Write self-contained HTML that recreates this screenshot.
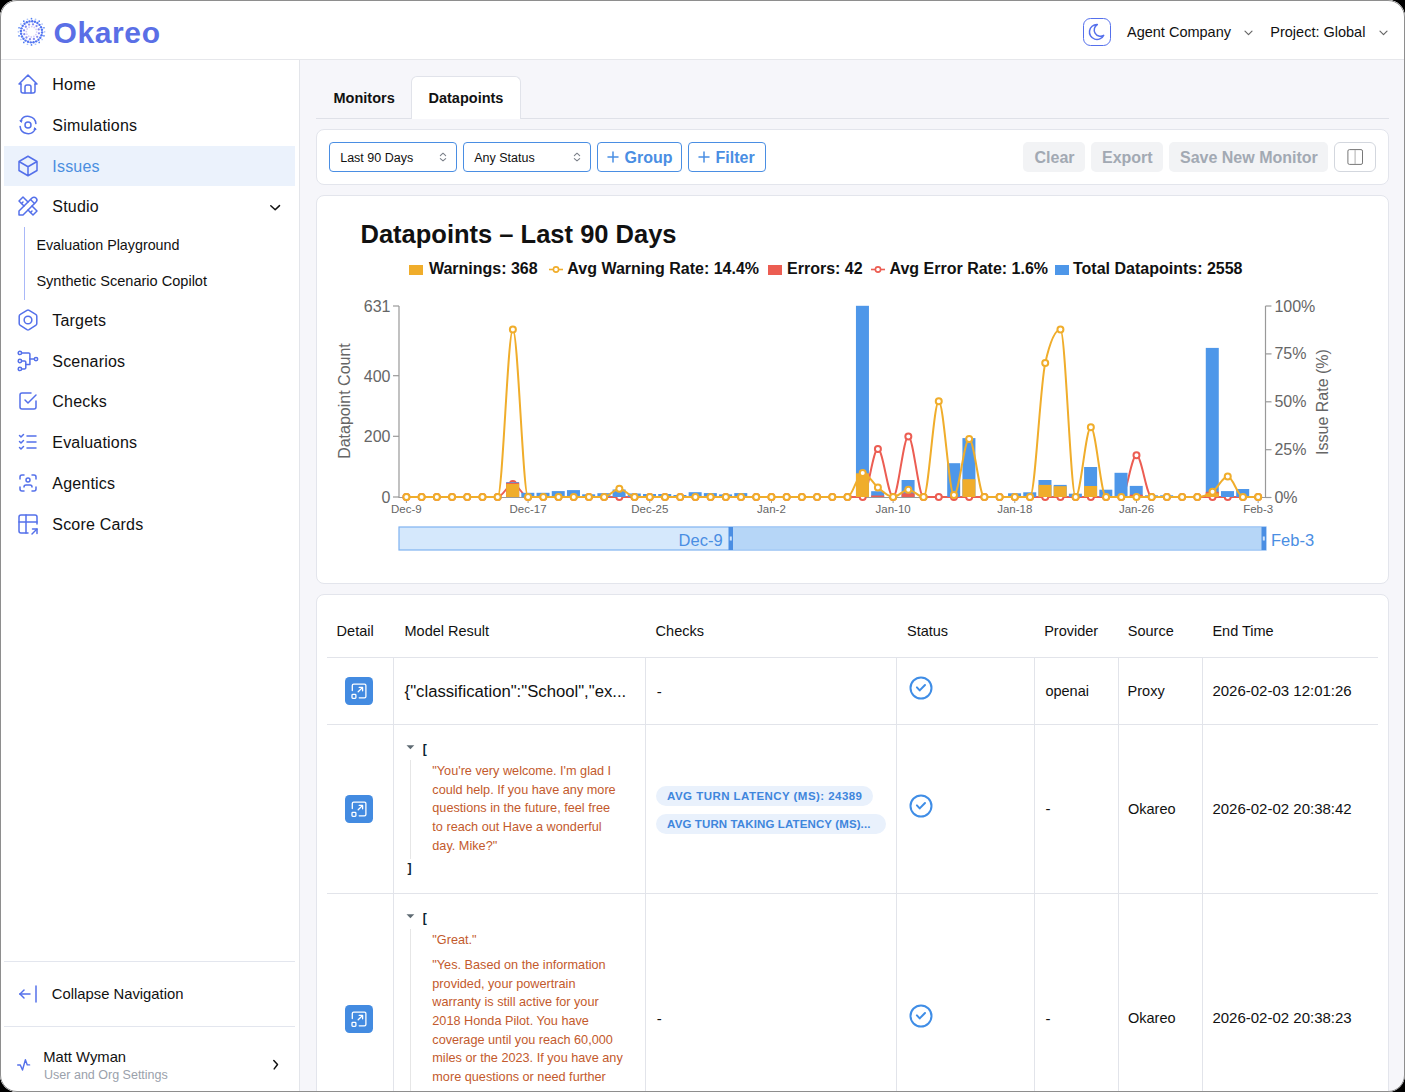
<!DOCTYPE html><html><head><meta charset="utf-8"><style>
html,body{margin:0;padding:0;background:#000;}
body{width:1405px;height:1092px;overflow:hidden;position:relative;font-family:"Liberation Sans",sans-serif;}
#win{position:absolute;left:0;top:0;width:1405px;height:1092px;border-radius:17px;overflow:hidden;background:#f6f6fa;}
.t{position:absolute;line-height:1;white-space:nowrap;}
svg{overflow:visible;position:absolute;}
</style></head><body><div id="win"><div style="position:absolute;left:0px;top:0px;width:1405px;height:59px;box-sizing:border-box;background:#fff;"></div><div style="position:absolute;left:0px;top:59px;width:1405px;height:1px;box-sizing:border-box;background:#e6e7eb;"></div><div style="position:absolute;left:0px;top:60px;width:299px;height:1032px;box-sizing:border-box;background:#fff;"></div><div style="position:absolute;left:299px;top:60px;width:1px;height:1032px;box-sizing:border-box;background:#e3e5ea;"></div><svg style="position:absolute;left:0px;top:0px;" width="60" height="60" viewBox="0 0 60 60" fill="none" ><circle cx="44.60" cy="31.80" r="0.85" fill="#4f7ff5" opacity="0.45"/><circle cx="43.96" cy="35.85" r="0.85" fill="#4f7ff5" opacity="1.0"/><circle cx="42.10" cy="39.50" r="0.85" fill="#4f7ff5" opacity="0.45"/><circle cx="39.20" cy="42.40" r="0.85" fill="#4f7ff5" opacity="1.0"/><circle cx="35.55" cy="44.26" r="0.85" fill="#4f7ff5" opacity="0.45"/><circle cx="31.50" cy="44.90" r="0.85" fill="#4f7ff5" opacity="1.0"/><circle cx="27.45" cy="44.26" r="0.85" fill="#4f7ff5" opacity="0.45"/><circle cx="23.80" cy="42.40" r="0.85" fill="#4f7ff5" opacity="1.0"/><circle cx="20.90" cy="39.50" r="0.85" fill="#4f7ff5" opacity="0.45"/><circle cx="19.04" cy="35.85" r="0.85" fill="#4f7ff5" opacity="1.0"/><circle cx="18.40" cy="31.80" r="0.85" fill="#4f7ff5" opacity="0.45"/><circle cx="19.04" cy="27.75" r="0.85" fill="#4f7ff5" opacity="1.0"/><circle cx="20.90" cy="24.10" r="0.85" fill="#4f7ff5" opacity="0.45"/><circle cx="23.80" cy="21.20" r="0.85" fill="#4f7ff5" opacity="1.0"/><circle cx="27.45" cy="19.34" r="0.85" fill="#4f7ff5" opacity="0.45"/><circle cx="31.50" cy="18.70" r="0.85" fill="#4f7ff5" opacity="1.0"/><circle cx="35.55" cy="19.34" r="0.85" fill="#4f7ff5" opacity="0.45"/><circle cx="39.20" cy="21.20" r="0.85" fill="#4f7ff5" opacity="1.0"/><circle cx="42.10" cy="24.10" r="0.85" fill="#4f7ff5" opacity="0.45"/><circle cx="43.96" cy="27.75" r="0.85" fill="#4f7ff5" opacity="1.0"/><circle cx="42.07" cy="32.54" r="1.2" fill="#3f66f0" opacity="0.9"/><circle cx="41.52" cy="35.25" r="1.2" fill="#3f66f0" opacity="0.9"/><circle cx="40.29" cy="37.73" r="1.2" fill="#3f66f0" opacity="0.9"/><circle cx="38.45" cy="39.80" r="1.2" fill="#3f66f0" opacity="0.9"/><circle cx="36.14" cy="41.33" r="1.2" fill="#3f66f0" opacity="0.9"/><circle cx="33.52" cy="42.21" r="1.2" fill="#3f66f0" opacity="0.9"/><circle cx="30.76" cy="42.37" r="1.2" fill="#3f66f0" opacity="0.9"/><circle cx="28.05" cy="41.82" r="1.2" fill="#3f66f0" opacity="0.9"/><circle cx="25.57" cy="40.59" r="1.2" fill="#3f66f0" opacity="0.9"/><circle cx="23.50" cy="38.75" r="1.2" fill="#3f66f0" opacity="0.9"/><circle cx="21.97" cy="36.44" r="1.2" fill="#3f66f0" opacity="0.9"/><circle cx="21.09" cy="33.82" r="1.2" fill="#3f66f0" opacity="0.9"/><circle cx="20.93" cy="31.06" r="1.2" fill="#3f66f0" opacity="0.9"/><circle cx="21.48" cy="28.35" r="1.2" fill="#3f66f0" opacity="0.9"/><circle cx="22.71" cy="25.87" r="1.2" fill="#3f66f0" opacity="0.9"/><circle cx="24.55" cy="23.80" r="1.2" fill="#3f66f0" opacity="0.9"/><circle cx="26.86" cy="22.27" r="1.2" fill="#3f66f0" opacity="0.9"/><circle cx="29.48" cy="21.39" r="1.2" fill="#3f66f0" opacity="0.9"/><circle cx="32.24" cy="21.23" r="1.2" fill="#3f66f0" opacity="0.9"/><circle cx="34.95" cy="21.78" r="1.2" fill="#3f66f0" opacity="0.9"/><circle cx="37.43" cy="23.01" r="1.2" fill="#3f66f0" opacity="0.9"/><circle cx="39.50" cy="24.85" r="1.2" fill="#3f66f0" opacity="0.9"/><circle cx="41.03" cy="27.16" r="1.2" fill="#3f66f0" opacity="0.9"/><circle cx="41.91" cy="29.78" r="1.2" fill="#3f66f0" opacity="0.9"/><circle cx="38.95" cy="33.31" r="1.15" fill="#6a6fee" opacity="0.8"/><circle cx="37.20" cy="36.83" r="1.15" fill="#6a6fee" opacity="0.8"/><circle cx="33.92" cy="39.01" r="1.15" fill="#6a6fee" opacity="0.8"/><circle cx="29.99" cy="39.25" r="1.15" fill="#6a6fee" opacity="0.8"/><circle cx="26.47" cy="37.50" r="1.15" fill="#6a6fee" opacity="0.8"/><circle cx="24.29" cy="34.22" r="1.15" fill="#6a6fee" opacity="0.8"/><circle cx="24.05" cy="30.29" r="1.15" fill="#6a6fee" opacity="0.8"/><circle cx="25.80" cy="26.77" r="1.15" fill="#6a6fee" opacity="0.8"/><circle cx="29.08" cy="24.59" r="1.15" fill="#6a6fee" opacity="0.8"/><circle cx="33.01" cy="24.35" r="1.15" fill="#6a6fee" opacity="0.8"/><circle cx="36.53" cy="26.10" r="1.15" fill="#6a6fee" opacity="0.8"/><circle cx="38.71" cy="29.38" r="1.15" fill="#6a6fee" opacity="0.8"/><circle cx="36.69" cy="32.06" r="0.9" fill="#b3a6f4" opacity="0.55"/><circle cx="35.87" cy="34.62" r="0.9" fill="#b3a6f4" opacity="0.55"/><circle cx="33.87" cy="36.43" r="0.9" fill="#b3a6f4" opacity="0.55"/><circle cx="31.24" cy="36.99" r="0.9" fill="#b3a6f4" opacity="0.55"/><circle cx="28.68" cy="36.17" r="0.9" fill="#b3a6f4" opacity="0.55"/><circle cx="26.87" cy="34.17" r="0.9" fill="#b3a6f4" opacity="0.55"/><circle cx="26.31" cy="31.54" r="0.9" fill="#b3a6f4" opacity="0.55"/><circle cx="27.13" cy="28.98" r="0.9" fill="#b3a6f4" opacity="0.55"/><circle cx="29.13" cy="27.17" r="0.9" fill="#b3a6f4" opacity="0.55"/><circle cx="31.76" cy="26.61" r="0.9" fill="#b3a6f4" opacity="0.55"/><circle cx="34.32" cy="27.43" r="0.9" fill="#b3a6f4" opacity="0.55"/><circle cx="36.13" cy="29.43" r="0.9" fill="#b3a6f4" opacity="0.55"/></svg><div class="t" style="left:53.60px;top:18.00px;font-size:30px;color:#5a6fe6;font-weight:700;letter-spacing:0.6px;">Okareo</div><svg style="position:absolute;left:1083px;top:18px;" width="28" height="28" viewBox="0 0 28 28" fill="none" ><rect x="0.5" y="0.5" width="27" height="27" rx="7" stroke="#5570ec" stroke-width="1"/><g transform="translate(4,4) scale(0.8333)"><path d="M12 3c.132 0 .263 0 .393 0a7.5 7.5 0 0 0 7.605 12.992a9 9 0 1 1 -7.998 -12.992z" stroke="#5570ec" stroke-width="1.8" stroke-linecap="round" stroke-linejoin="round"/></g></svg><div class="t" style="left:1127.00px;top:25.00px;font-size:14.5px;color:#111;">Agent Company</div><svg style="position:absolute;left:1243.5px;top:28.5px;" width="9" height="7" viewBox="0 0 9 7" fill="none" ><path d="M1 2.10 L4.50 5.60 L8.00 2.10" stroke="#666" stroke-width="1.2" stroke-linecap="round" stroke-linejoin="round"/></svg><div class="t" style="left:1270.30px;top:25.00px;font-size:14.5px;color:#111;">Project: Global</div><svg style="position:absolute;left:1378.5px;top:28.5px;" width="9" height="7" viewBox="0 0 9 7" fill="none" ><path d="M1 2.10 L4.50 5.60 L8.00 2.10" stroke="#666" stroke-width="1.2" stroke-linecap="round" stroke-linejoin="round"/></svg><div style="position:absolute;left:4px;top:146px;width:291px;height:40px;box-sizing:border-box;background:#ebf2fc;"></div><div class="t" style="left:52.30px;top:77.00px;font-size:16px;color:#111;letter-spacing:0.2px;">Home</div><svg style="position:absolute;left:16px;top:72.2px;" width="24" height="24" viewBox="0 0 24 24" fill="none" ><g stroke="#5470ea" stroke-width="1.500" stroke-linecap="round" stroke-linejoin="round" fill="none"><path d="M5 12l-2 0l9 -9l9 9l-2 0"/><path d="M5 12v7a2 2 0 0 0 2 2h10a2 2 0 0 0 2 -2v-7"/><path d="M9 21v-6a2 2 0 0 1 2 -2h2a2 2 0 0 1 2 2v6"/></g></svg><div class="t" style="left:52.30px;top:118.00px;font-size:16px;color:#111;letter-spacing:0.2px;">Simulations</div><svg style="position:absolute;left:16px;top:113.2px;" width="24" height="24" viewBox="0 0 24 24" fill="none" ><g stroke="#5470ea" stroke-width="1.5" stroke-linecap="round" fill="none"><circle cx="12" cy="12" r="3"/><path d="M4.6 8.2 A8 8 0 0 1 19.9 10.6"/><path d="M4.1 13.4 A8 8 0 0 0 19.4 15.8"/></g><path d="M3.2 7.3 L6.6 6.9 L5.6 10.0 Z" fill="#5470ea"/><path d="M20.8 16.7 L17.4 17.1 L18.4 14.0 Z" fill="#5470ea"/></svg><div class="t" style="left:52.30px;top:159.00px;font-size:16px;color:#4a8ee0;letter-spacing:0.2px;">Issues</div><svg style="position:absolute;left:16px;top:154.2px;" width="24" height="24" viewBox="0 0 24 24" fill="none" ><g stroke="#5470ea" stroke-width="1.500" stroke-linecap="round" stroke-linejoin="round" fill="none"><path d="M21 7.5l-9 -5.25L3 7.5m18 0l-9 5.25m9 -5.25v9l-9 5.25M3 7.5l9 5.25M3 7.5v9l9 5.25m0 -9v9"/></g></svg><div class="t" style="left:52.30px;top:199.00px;font-size:16px;color:#111;letter-spacing:0.2px;">Studio</div><svg style="position:absolute;left:16px;top:194.2px;" width="24" height="24" viewBox="0 0 24 24" fill="none" ><g stroke="#5470ea" stroke-width="1.500" stroke-linecap="round" stroke-linejoin="round" fill="none"><path d="M3 21h4l13 -13a1.5 1.5 0 0 0 -4 -4l-13 13v4"/><path d="M14.5 5.5l4 4"/><path d="M12 8l-5 -5l-4 4l5 5"/><path d="M7 8l-1.5 1.5"/><path d="M16 12l5 5l-4 4l-5 -5"/><path d="M16 17l-1.5 1.5"/></g></svg><div class="t" style="left:52.30px;top:313.00px;font-size:16px;color:#111;letter-spacing:0.2px;">Targets</div><svg style="position:absolute;left:16px;top:308.2px;" width="24" height="24" viewBox="0 0 24 24" fill="none" ><g stroke="#5470ea" stroke-width="1.364" stroke-linecap="round" stroke-linejoin="round" fill="none" transform="translate(12 12) scale(1.1) translate(-12 -12)"><path d="M19 6.84a2.01 2.01 0 0 1 1 1.754v6.555c0 .728 -.394 1.4 -1.03 1.753l-6 3.844a2 2 0 0 1 -1.94 0l-6 -3.844a2.006 2.006 0 0 1 -1.03 -1.752v-6.556c0 -.729 .394 -1.4 1.03 -1.753l6 -3.582a2.049 2.049 0 0 1 2 0l6 3.582h-.03z"/><path d="M8.5 12a3.5 3.5 0 1 0 7 0a3.5 3.5 0 1 0 -7 0"/></g></svg><div class="t" style="left:52.30px;top:354.00px;font-size:16px;color:#111;letter-spacing:0.2px;">Scenarios</div><svg style="position:absolute;left:16px;top:349.2px;" width="24" height="24" viewBox="0 0 24 24" fill="none" ><g stroke="#5470ea" stroke-width="1.5" stroke-linecap="round" stroke-linejoin="round" fill="none"><circle cx="3.9" cy="3.9" r="1.7"/><circle cx="3.9" cy="12" r="1.7"/><circle cx="3.9" cy="19.9" r="1.7"/><circle cx="20" cy="10.1" r="1.7"/><path d="M5.7 3.9H12.7a1.2 1.2 0 0 1 1.2 1.2V15.4H9.8"/><path d="M5.7 12H8.6a1.2 1.2 0 0 1 1.2 1.2V18.7a1.2 1.2 0 0 1 -1.2 1.2H5.7"/><path d="M13.9 10.1H18.3"/></g></svg><div class="t" style="left:52.30px;top:394.00px;font-size:16px;color:#111;letter-spacing:0.2px;">Checks</div><svg style="position:absolute;left:16px;top:389.2px;" width="24" height="24" viewBox="0 0 24 24" fill="none" ><g stroke="#5470ea" stroke-width="1.500" stroke-linecap="round" stroke-linejoin="round" fill="none"><path d="M9 11l3 3l8 -8"/><path d="M20 12v6a2 2 0 0 1 -2 2h-12a2 2 0 0 1 -2 -2v-12a2 2 0 0 1 2 -2h9"/></g></svg><div class="t" style="left:52.30px;top:435.00px;font-size:16px;color:#111;letter-spacing:0.2px;">Evaluations</div><svg style="position:absolute;left:16px;top:430.2px;" width="24" height="24" viewBox="0 0 24 24" fill="none" ><g stroke="#5470ea" stroke-width="1.500" stroke-linecap="round" stroke-linejoin="round" fill="none"><path d="M3.5 5.5l1.5 1.5l2.5 -2.5"/><path d="M3.5 11.5l1.5 1.5l2.5 -2.5"/><path d="M3.5 17.5l1.5 1.5l2.5 -2.5"/><path d="M11 6l9 0"/><path d="M11 12l9 0"/><path d="M11 18l9 0"/></g></svg><div class="t" style="left:52.30px;top:476.00px;font-size:16px;color:#111;letter-spacing:0.2px;">Agentics</div><svg style="position:absolute;left:16px;top:471.2px;" width="24" height="24" viewBox="0 0 24 24" fill="none" ><g stroke="#5470ea" stroke-width="1.500" stroke-linecap="round" stroke-linejoin="round" fill="none"><path d="M10 9a2 2 0 1 0 4 0a2 2 0 0 0 -4 0"/><path d="M4 8v-2a2 2 0 0 1 2 -2h2"/><path d="M4 16v2a2 2 0 0 0 2 2h2"/><path d="M16 4h2a2 2 0 0 1 2 2v2"/><path d="M16 20h2a2 2 0 0 0 2 -2v-2"/><path d="M8 16a2 2 0 0 1 2 -2h4a2 2 0 0 1 2 2"/></g></svg><div class="t" style="left:52.30px;top:517.00px;font-size:16px;color:#111;letter-spacing:0.2px;">Score Cards</div><svg style="position:absolute;left:16px;top:512.2px;" width="24" height="24" viewBox="0 0 24 24" fill="none" ><g stroke="#5470ea" stroke-width="1.500" stroke-linecap="round" stroke-linejoin="round" fill="none"><path d="M12 21h-7a2 2 0 0 1 -2 -2v-14a2 2 0 0 1 2 -2h14a2 2 0 0 1 2 2v7"/><path d="M3 10h18"/><path d="M10 3v18"/><path d="M16 22l5 -5"/><path d="M21 21.5v-4.5h-4.5"/></g></svg><svg style="position:absolute;left:0px;top:0px;" width="1" height="1" viewBox="0 0 1 1" fill="none" ><path d="M270.8 205.8 L275.2 209.7 L279.5 205.6" stroke="#111" stroke-width="1.5" stroke-linecap="round" stroke-linejoin="round"/></svg><div style="position:absolute;left:24px;top:227px;width:1px;height:73px;box-sizing:border-box;background:#a9b8f8;"></div><div class="t" style="left:36.40px;top:238.00px;font-size:14.3px;color:#111;">Evaluation Playground</div><div class="t" style="left:36.40px;top:274.00px;font-size:14.55px;color:#111;">Synthetic Scenario Copilot</div><div style="position:absolute;left:4px;top:961px;width:291px;height:1px;box-sizing:border-box;background:#e3e6ee;"></div><div style="position:absolute;left:4px;top:1026px;width:291px;height:1px;box-sizing:border-box;background:#e3e6ee;"></div><svg style="position:absolute;left:15.5px;top:982px;" width="24" height="24" viewBox="0 0 24 24" fill="none" ><g stroke="#5470ea" stroke-width="1.500" stroke-linecap="round" stroke-linejoin="round" fill="none"><path d="M4 12l10 0"/><path d="M4 12l4 4"/><path d="M4 12l4 -4"/><path d="M20 4l0 16"/></g></svg><div class="t" style="left:51.80px;top:987.00px;font-size:14.8px;color:#111;">Collapse Navigation</div><svg style="position:absolute;left:10px;top:1045px;" width="30" height="35" viewBox="0 0 30 35" fill="none" ><path d="M7.7 20 H10.3 L12.5 25 L15.4 14.7 L17.3 19.9 H19.6" stroke="#5470ea" stroke-width="1.4" stroke-linecap="round" stroke-linejoin="round" fill="none"/></svg><div class="t" style="left:43.20px;top:1050.00px;font-size:14.8px;color:#111;">Matt Wyman</div><div class="t" style="left:44.10px;top:1069.00px;font-size:12.5px;color:#9aa1ab;">User and Org Settings</div><svg style="position:absolute;left:272px;top:1058px;" width="8" height="12" viewBox="0 0 8 12" fill="none" ><path d="M1.8 2.6 L5.5 6.5 L2.2 10.9" stroke="#111" stroke-width="1.5" stroke-linecap="round" stroke-linejoin="round"/></svg><div style="position:absolute;left:316px;top:118px;width:1073px;height:1px;box-sizing:border-box;background:#dfe1e8;"></div><div style="position:absolute;left:411px;top:76px;width:110px;height:43px;box-sizing:border-box;background:#fff;border:1px solid #e1e3ea;border-bottom:none;border-radius:6px 6px 0 0;"></div><div class="t" style="left:333.50px;top:91.00px;font-size:14.5px;color:#111;font-weight:700;">Monitors</div><div class="t" style="left:428.50px;top:91.00px;font-size:14.5px;color:#111;font-weight:700;">Datapoints</div><div style="position:absolute;left:316px;top:129px;width:1073px;height:56px;box-sizing:border-box;background:#fff;border:1px solid #e3e5ec;border-radius:8px;"></div><div style="position:absolute;left:329px;top:142px;width:128px;height:30px;box-sizing:border-box;background:#fff;border:1px solid #4a8ee3;border-radius:4px;"></div><div class="t" style="left:340.20px;top:152.00px;font-size:12.5px;color:#111;">Last 90 Days</div><svg style="position:absolute;left:439px;top:150px;" width="8" height="14" viewBox="0 0 8 14" fill="none" ><path d="M1.35 5.6 L4 3.2 L6.65 5.6 M1.35 8.6 L4 10.9 L6.65 8.6" stroke="#7a7f88" stroke-width="1.1" stroke-linecap="round" stroke-linejoin="round"/></svg><div style="position:absolute;left:463px;top:142px;width:128px;height:30px;box-sizing:border-box;background:#fff;border:1px solid #4a8ee3;border-radius:4px;"></div><div class="t" style="left:474.20px;top:152.00px;font-size:12.5px;color:#111;">Any Status</div><svg style="position:absolute;left:573px;top:150px;" width="8" height="14" viewBox="0 0 8 14" fill="none" ><path d="M1.35 5.6 L4 3.2 L6.65 5.6 M1.35 8.6 L4 10.9 L6.65 8.6" stroke="#7a7f88" stroke-width="1.1" stroke-linecap="round" stroke-linejoin="round"/></svg><div style="position:absolute;left:597px;top:142px;width:85px;height:30px;box-sizing:border-box;background:#fff;border:1px solid #4a8ee3;border-radius:4px;"></div><svg style="position:absolute;left:607px;top:151px;" width="12" height="12" viewBox="0 0 12 12" fill="none" ><path d="M6 1 V11 M1 6 H11" stroke="#4a8ee3" stroke-width="1.5" stroke-linecap="round"/></svg><div class="t" style="left:624.50px;top:150.00px;font-size:16px;color:#4a8ee3;font-weight:700;">Group</div><div style="position:absolute;left:688px;top:142px;width:78px;height:30px;box-sizing:border-box;background:#fff;border:1px solid #4a8ee3;border-radius:4px;"></div><svg style="position:absolute;left:698px;top:151px;" width="12" height="12" viewBox="0 0 12 12" fill="none" ><path d="M6 1 V11 M1 6 H11" stroke="#4a8ee3" stroke-width="1.5" stroke-linecap="round"/></svg><div class="t" style="left:715.50px;top:150.00px;font-size:16px;color:#4a8ee3;font-weight:700;">Filter</div><div style="position:absolute;left:1023px;top:142px;width:62px;height:30px;box-sizing:border-box;background:#f2f3f5;border-radius:5px;"></div><div class="t" style="left:1034.50px;top:150.00px;font-size:16px;color:#a2a9b3;font-weight:700;">Clear</div><div style="position:absolute;left:1091px;top:142px;width:72px;height:30px;box-sizing:border-box;background:#f2f3f5;border-radius:5px;"></div><div class="t" style="left:1102.00px;top:150.00px;font-size:16px;color:#a2a9b3;font-weight:700;">Export</div><div style="position:absolute;left:1169px;top:142px;width:159px;height:30px;box-sizing:border-box;background:#f2f3f5;border-radius:5px;"></div><div class="t" style="left:1180.00px;top:150.00px;font-size:16px;color:#a2a9b3;font-weight:700;">Save New Monitor</div><div style="position:absolute;left:1334px;top:142px;width:42px;height:30px;box-sizing:border-box;background:#fff;border:1px solid #d3d7de;border-radius:6px;"></div><svg style="position:absolute;left:1347px;top:149px;" width="16" height="16" viewBox="0 0 16 16" fill="none" ><rect x="0.9" y="0.6" width="14.6" height="14.8" rx="1.5" stroke="#777" stroke-width="1"/><path d="M8.1 1 V15" stroke="#bbb" stroke-width="1.2"/></svg><div style="position:absolute;left:316px;top:195px;width:1073px;height:389px;box-sizing:border-box;background:#fff;border:1px solid #e3e5ec;border-radius:8px;"></div><div class="t" style="left:360.50px;top:222.00px;font-size:25.5px;color:#111;font-weight:700;">Datapoints – Last 90 Days</div><svg style="left:0;top:0" width="1405" height="1092" viewBox="0 0 1405 1092"><path d="M399 306 V497.5 H1265.5 V306" stroke="#999" stroke-width="1.2" fill="none"/><path d="M393 306 H399" stroke="#999" stroke-width="1.2"/><path d="M393 375.7 H399" stroke="#999" stroke-width="1.2"/><path d="M393 436.3 H399" stroke="#999" stroke-width="1.2"/><path d="M393 497 H399" stroke="#999" stroke-width="1.2"/><path d="M1265.5 306 H1271.5" stroke="#999" stroke-width="1.2"/><path d="M1265.5 353.9 H1271.5" stroke="#999" stroke-width="1.2"/><path d="M1265.5 401.8 H1271.5" stroke="#999" stroke-width="1.2"/><path d="M1265.5 449.7 H1271.5" stroke="#999" stroke-width="1.2"/><path d="M1265.5 497.5 H1271.5" stroke="#999" stroke-width="1.2"/><path d="M406.40 497.5 V503" stroke="#999" stroke-width="1"/><path d="M528.08 497.5 V503" stroke="#999" stroke-width="1"/><path d="M649.76 497.5 V503" stroke="#999" stroke-width="1"/><path d="M771.44 497.5 V503" stroke="#999" stroke-width="1"/><path d="M893.12 497.5 V503" stroke="#999" stroke-width="1"/><path d="M1014.80 497.5 V503" stroke="#999" stroke-width="1"/><path d="M1136.48 497.5 V503" stroke="#999" stroke-width="1"/><path d="M1258.16 497.5 V503" stroke="#999" stroke-width="1"/><path d="M406.40,497.00C411.47,497.00 416.54,497.00 421.61,497.00C426.68,497.00 431.75,497.00 436.82,497.00C441.89,497.00 446.96,497.00 452.03,497.00C457.10,497.00 462.17,497.00 467.24,497.00C472.31,497.00 477.38,497.00 482.45,497.00C487.52,497.00 492.59,497.00 497.66,497.00C502.73,497.00 507.80,484.00 512.87,484.00C517.94,484.00 523.01,497.00 528.08,497.00C533.15,497.00 538.22,497.00 543.29,497.00C548.36,497.00 553.43,497.00 558.50,497.00C563.57,497.00 568.64,497.00 573.71,497.00C578.78,497.00 583.85,497.00 588.92,497.00C593.99,497.00 599.06,497.00 604.13,497.00C609.20,497.00 614.27,497.00 619.34,497.00C624.41,497.00 629.48,497.00 634.55,497.00C639.62,497.00 644.69,497.00 649.76,497.00C654.83,497.00 659.90,497.00 664.97,497.00C670.04,497.00 675.11,497.00 680.18,497.00C685.25,497.00 690.32,497.00 695.39,497.00C700.46,497.00 705.53,497.00 710.60,497.00C715.67,497.00 720.74,497.00 725.81,497.00C730.88,497.00 735.95,497.00 741.02,497.00C746.09,497.00 751.16,497.00 756.23,497.00C761.30,497.00 766.37,497.00 771.44,497.00C776.51,497.00 781.58,497.00 786.65,497.00C791.72,497.00 796.79,497.00 801.86,497.00C806.93,497.00 812.00,497.00 817.07,497.00C822.14,497.00 827.21,497.00 832.28,497.00C837.35,497.00 842.42,497.00 847.49,497.00C852.56,497.00 857.63,497.00 862.70,497.00C867.77,497.00 872.84,449.10 877.91,449.10C882.98,449.10 888.05,497.00 893.12,497.00C898.19,497.00 903.26,436.40 908.33,436.40C913.40,436.40 918.47,497.00 923.54,497.00C928.61,497.00 933.68,497.00 938.75,497.00C943.82,497.00 948.89,497.00 953.96,497.00C959.03,497.00 964.10,497.00 969.17,497.00C974.24,497.00 979.31,497.00 984.38,497.00C989.45,497.00 994.52,497.00 999.59,497.00C1004.66,497.00 1009.73,497.00 1014.80,497.00C1019.87,497.00 1024.94,497.00 1030.01,497.00C1035.08,497.00 1040.15,497.00 1045.22,497.00C1050.29,497.00 1055.36,497.00 1060.43,497.00C1065.50,497.00 1070.57,497.00 1075.64,497.00C1080.71,497.00 1085.78,497.00 1090.85,497.00C1095.92,497.00 1100.99,497.00 1106.06,497.00C1111.13,497.00 1116.20,497.00 1121.27,497.00C1126.34,497.00 1131.41,455.30 1136.48,455.30C1141.55,455.30 1146.62,497.00 1151.69,497.00C1156.76,497.00 1161.83,497.00 1166.90,497.00C1171.97,497.00 1177.04,497.00 1182.11,497.00C1187.18,497.00 1192.25,497.00 1197.32,497.00C1202.39,497.00 1207.46,497.00 1212.53,497.00C1217.60,497.00 1222.67,497.00 1227.74,497.00C1232.81,497.00 1237.88,497.00 1242.95,497.00C1248.02,497.00 1253.09,497.00 1258.16,497.00" stroke="#ec5d52" stroke-width="2" fill="none"/><circle cx="406.40" cy="497.00" r="3" fill="#fff" stroke="#ec5d52" stroke-width="2"/><circle cx="421.61" cy="497.00" r="3" fill="#fff" stroke="#ec5d52" stroke-width="2"/><circle cx="436.82" cy="497.00" r="3" fill="#fff" stroke="#ec5d52" stroke-width="2"/><circle cx="452.03" cy="497.00" r="3" fill="#fff" stroke="#ec5d52" stroke-width="2"/><circle cx="467.24" cy="497.00" r="3" fill="#fff" stroke="#ec5d52" stroke-width="2"/><circle cx="482.45" cy="497.00" r="3" fill="#fff" stroke="#ec5d52" stroke-width="2"/><circle cx="497.66" cy="497.00" r="3" fill="#fff" stroke="#ec5d52" stroke-width="2"/><circle cx="512.87" cy="484.00" r="3" fill="#fff" stroke="#ec5d52" stroke-width="2"/><circle cx="528.08" cy="497.00" r="3" fill="#fff" stroke="#ec5d52" stroke-width="2"/><circle cx="543.29" cy="497.00" r="3" fill="#fff" stroke="#ec5d52" stroke-width="2"/><circle cx="558.50" cy="497.00" r="3" fill="#fff" stroke="#ec5d52" stroke-width="2"/><circle cx="573.71" cy="497.00" r="3" fill="#fff" stroke="#ec5d52" stroke-width="2"/><circle cx="588.92" cy="497.00" r="3" fill="#fff" stroke="#ec5d52" stroke-width="2"/><circle cx="604.13" cy="497.00" r="3" fill="#fff" stroke="#ec5d52" stroke-width="2"/><circle cx="619.34" cy="497.00" r="3" fill="#fff" stroke="#ec5d52" stroke-width="2"/><circle cx="634.55" cy="497.00" r="3" fill="#fff" stroke="#ec5d52" stroke-width="2"/><circle cx="649.76" cy="497.00" r="3" fill="#fff" stroke="#ec5d52" stroke-width="2"/><circle cx="664.97" cy="497.00" r="3" fill="#fff" stroke="#ec5d52" stroke-width="2"/><circle cx="680.18" cy="497.00" r="3" fill="#fff" stroke="#ec5d52" stroke-width="2"/><circle cx="695.39" cy="497.00" r="3" fill="#fff" stroke="#ec5d52" stroke-width="2"/><circle cx="710.60" cy="497.00" r="3" fill="#fff" stroke="#ec5d52" stroke-width="2"/><circle cx="725.81" cy="497.00" r="3" fill="#fff" stroke="#ec5d52" stroke-width="2"/><circle cx="741.02" cy="497.00" r="3" fill="#fff" stroke="#ec5d52" stroke-width="2"/><circle cx="756.23" cy="497.00" r="3" fill="#fff" stroke="#ec5d52" stroke-width="2"/><circle cx="771.44" cy="497.00" r="3" fill="#fff" stroke="#ec5d52" stroke-width="2"/><circle cx="786.65" cy="497.00" r="3" fill="#fff" stroke="#ec5d52" stroke-width="2"/><circle cx="801.86" cy="497.00" r="3" fill="#fff" stroke="#ec5d52" stroke-width="2"/><circle cx="817.07" cy="497.00" r="3" fill="#fff" stroke="#ec5d52" stroke-width="2"/><circle cx="832.28" cy="497.00" r="3" fill="#fff" stroke="#ec5d52" stroke-width="2"/><circle cx="847.49" cy="497.00" r="3" fill="#fff" stroke="#ec5d52" stroke-width="2"/><circle cx="862.70" cy="497.00" r="3" fill="#fff" stroke="#ec5d52" stroke-width="2"/><circle cx="877.91" cy="449.10" r="3" fill="#fff" stroke="#ec5d52" stroke-width="2"/><circle cx="893.12" cy="497.00" r="3" fill="#fff" stroke="#ec5d52" stroke-width="2"/><circle cx="908.33" cy="436.40" r="3" fill="#fff" stroke="#ec5d52" stroke-width="2"/><circle cx="923.54" cy="497.00" r="3" fill="#fff" stroke="#ec5d52" stroke-width="2"/><circle cx="938.75" cy="497.00" r="3" fill="#fff" stroke="#ec5d52" stroke-width="2"/><circle cx="953.96" cy="497.00" r="3" fill="#fff" stroke="#ec5d52" stroke-width="2"/><circle cx="969.17" cy="497.00" r="3" fill="#fff" stroke="#ec5d52" stroke-width="2"/><circle cx="984.38" cy="497.00" r="3" fill="#fff" stroke="#ec5d52" stroke-width="2"/><circle cx="999.59" cy="497.00" r="3" fill="#fff" stroke="#ec5d52" stroke-width="2"/><circle cx="1014.80" cy="497.00" r="3" fill="#fff" stroke="#ec5d52" stroke-width="2"/><circle cx="1030.01" cy="497.00" r="3" fill="#fff" stroke="#ec5d52" stroke-width="2"/><circle cx="1045.22" cy="497.00" r="3" fill="#fff" stroke="#ec5d52" stroke-width="2"/><circle cx="1060.43" cy="497.00" r="3" fill="#fff" stroke="#ec5d52" stroke-width="2"/><circle cx="1075.64" cy="497.00" r="3" fill="#fff" stroke="#ec5d52" stroke-width="2"/><circle cx="1090.85" cy="497.00" r="3" fill="#fff" stroke="#ec5d52" stroke-width="2"/><circle cx="1106.06" cy="497.00" r="3" fill="#fff" stroke="#ec5d52" stroke-width="2"/><circle cx="1121.27" cy="497.00" r="3" fill="#fff" stroke="#ec5d52" stroke-width="2"/><circle cx="1136.48" cy="455.30" r="3" fill="#fff" stroke="#ec5d52" stroke-width="2"/><circle cx="1151.69" cy="497.00" r="3" fill="#fff" stroke="#ec5d52" stroke-width="2"/><circle cx="1166.90" cy="497.00" r="3" fill="#fff" stroke="#ec5d52" stroke-width="2"/><circle cx="1182.11" cy="497.00" r="3" fill="#fff" stroke="#ec5d52" stroke-width="2"/><circle cx="1197.32" cy="497.00" r="3" fill="#fff" stroke="#ec5d52" stroke-width="2"/><circle cx="1212.53" cy="497.00" r="3" fill="#fff" stroke="#ec5d52" stroke-width="2"/><circle cx="1227.74" cy="497.00" r="3" fill="#fff" stroke="#ec5d52" stroke-width="2"/><circle cx="1242.95" cy="497.00" r="3" fill="#fff" stroke="#ec5d52" stroke-width="2"/><circle cx="1258.16" cy="497.00" r="3" fill="#fff" stroke="#ec5d52" stroke-width="2"/><rect x="506.12" y="482.1" width="13.0" height="14.90" fill="#4e97e9"/><rect x="521.33" y="492.8" width="13.0" height="4.20" fill="#4e97e9"/><rect x="536.54" y="492.8" width="13.0" height="4.20" fill="#4e97e9"/><rect x="551.75" y="491.1" width="13.0" height="5.90" fill="#4e97e9"/><rect x="566.96" y="490.1" width="13.0" height="6.90" fill="#4e97e9"/><rect x="582.17" y="494.3" width="13.0" height="2.70" fill="#4e97e9"/><rect x="597.38" y="493.2" width="13.0" height="3.80" fill="#4e97e9"/><rect x="612.59" y="489.5" width="13.0" height="7.50" fill="#4e97e9"/><rect x="627.80" y="493.5" width="13.0" height="3.50" fill="#4e97e9"/><rect x="643.01" y="494" width="13.0" height="3.00" fill="#4e97e9"/><rect x="658.22" y="494" width="13.0" height="3.00" fill="#4e97e9"/><rect x="673.43" y="495" width="13.0" height="2.00" fill="#4e97e9"/><rect x="688.64" y="492.2" width="13.0" height="4.80" fill="#4e97e9"/><rect x="703.85" y="493.1" width="13.0" height="3.90" fill="#4e97e9"/><rect x="719.06" y="494.4" width="13.0" height="2.60" fill="#4e97e9"/><rect x="734.27" y="493.1" width="13.0" height="3.90" fill="#4e97e9"/><rect x="855.95" y="305.8" width="13.0" height="191.20" fill="#4e97e9"/><rect x="871.16" y="491.2" width="13.0" height="5.80" fill="#4e97e9"/><rect x="901.58" y="480" width="13.0" height="17.00" fill="#4e97e9"/><rect x="947.21" y="463.2" width="13.0" height="33.80" fill="#4e97e9"/><rect x="962.42" y="438.1" width="13.0" height="58.90" fill="#4e97e9"/><rect x="1008.05" y="493.3" width="13.0" height="3.70" fill="#4e97e9"/><rect x="1023.26" y="492.3" width="13.0" height="4.70" fill="#4e97e9"/><rect x="1038.47" y="480" width="13.0" height="17.00" fill="#4e97e9"/><rect x="1053.68" y="484.9" width="13.0" height="12.10" fill="#4e97e9"/><rect x="1068.89" y="493.7" width="13.0" height="3.30" fill="#4e97e9"/><rect x="1084.10" y="467" width="13.0" height="30.00" fill="#4e97e9"/><rect x="1099.31" y="489.7" width="13.0" height="7.30" fill="#4e97e9"/><rect x="1114.52" y="472.8" width="13.0" height="24.20" fill="#4e97e9"/><rect x="1129.73" y="485.9" width="13.0" height="11.10" fill="#4e97e9"/><rect x="1144.94" y="495.3" width="13.0" height="1.70" fill="#4e97e9"/><rect x="1160.15" y="495.3" width="13.0" height="1.70" fill="#4e97e9"/><rect x="1205.78" y="347.9" width="13.0" height="149.10" fill="#4e97e9"/><rect x="1220.99" y="491.1" width="13.0" height="5.90" fill="#4e97e9"/><rect x="1236.20" y="489" width="13.0" height="8.00" fill="#4e97e9"/><rect x="506.12" y="482.8" width="13.0" height="14.20" fill="#ec5d52"/><rect x="871.16" y="495.5" width="13.0" height="1.50" fill="#ec5d52"/><rect x="901.58" y="493.3" width="13.0" height="3.70" fill="#ec5d52"/><rect x="1129.73" y="494.7" width="13.0" height="2.30" fill="#ec5d52"/><rect x="1205.78" y="491.8" width="13.0" height="5.20" fill="#ec5d52"/><rect x="506.12" y="483.9" width="13.0" height="13.10" fill="#f0ad2b"/><rect x="855.95" y="473.3" width="13.0" height="23.70" fill="#f0ad2b"/><rect x="962.42" y="479.2" width="13.0" height="17.80" fill="#f0ad2b"/><rect x="1038.47" y="484.9" width="13.0" height="12.10" fill="#f0ad2b"/><rect x="1053.68" y="486.2" width="13.0" height="10.80" fill="#f0ad2b"/><rect x="1084.10" y="486" width="13.0" height="11.00" fill="#f0ad2b"/><rect x="1205.78" y="493.3" width="13.0" height="3.70" fill="#f0ad2b"/><path d="M406.40,497.00C411.47,497.00 416.54,497.00 421.61,497.00C426.68,497.00 431.75,497.00 436.82,497.00C441.89,497.00 446.96,497.00 452.03,497.00C457.10,497.00 462.17,497.00 467.24,497.00C472.31,497.00 477.38,497.00 482.45,497.00C487.52,497.00 492.59,497.00 497.66,497.00C502.73,497.00 507.80,329.40 512.87,329.40C517.94,329.40 523.01,497.00 528.08,497.00C533.15,497.00 538.22,497.00 543.29,497.00C548.36,497.00 553.43,497.00 558.50,497.00C563.57,497.00 568.64,497.00 573.71,497.00C578.78,497.00 583.85,497.00 588.92,497.00C593.99,497.00 599.06,497.00 604.13,497.00C609.20,497.00 614.27,488.70 619.34,488.70C624.41,488.70 629.48,497.00 634.55,497.00C639.62,497.00 644.69,497.00 649.76,497.00C654.83,497.00 659.90,497.00 664.97,497.00C670.04,497.00 675.11,497.00 680.18,497.00C685.25,497.00 690.32,497.00 695.39,497.00C700.46,497.00 705.53,497.00 710.60,497.00C715.67,497.00 720.74,497.00 725.81,497.00C730.88,497.00 735.95,497.00 741.02,497.00C746.09,497.00 751.16,497.00 756.23,497.00C761.30,497.00 766.37,497.00 771.44,497.00C776.51,497.00 781.58,497.00 786.65,497.00C791.72,497.00 796.79,497.00 801.86,497.00C806.93,497.00 812.00,497.00 817.07,497.00C822.14,497.00 827.21,497.00 832.28,497.00C837.35,497.00 842.42,497.00 847.49,497.00C852.56,497.00 857.63,472.90 862.70,472.90C867.77,472.90 872.84,483.38 877.91,487.40C882.98,491.42 888.05,497.00 893.12,497.00C898.19,497.00 903.26,489.70 908.33,489.70C913.40,489.70 918.47,497.00 923.54,497.00C928.61,497.00 933.68,401.30 938.75,401.30C943.82,401.30 948.89,495.00 953.96,495.00C959.03,495.00 964.10,439.00 969.17,439.00C974.24,439.00 979.31,497.00 984.38,497.00C989.45,497.00 994.52,497.00 999.59,497.00C1004.66,497.00 1009.73,497.00 1014.80,497.00C1019.87,497.00 1024.94,497.00 1030.01,497.00C1035.08,497.00 1040.15,385.43 1045.22,363.10C1050.29,340.77 1055.36,329.60 1060.43,329.60C1065.50,329.60 1070.57,497.00 1075.64,497.00C1080.71,497.00 1085.78,427.30 1090.85,427.30C1095.92,427.30 1100.99,497.00 1106.06,497.00C1111.13,497.00 1116.20,497.00 1121.27,497.00C1126.34,497.00 1131.41,497.00 1136.48,497.00C1141.55,497.00 1146.62,497.00 1151.69,497.00C1156.76,497.00 1161.83,497.00 1166.90,497.00C1171.97,497.00 1177.04,497.00 1182.11,497.00C1187.18,497.00 1192.25,497.00 1197.32,497.00C1202.39,497.00 1207.46,495.20 1212.53,491.80C1217.60,488.40 1222.67,476.60 1227.74,476.60C1232.81,476.60 1237.88,497.00 1242.95,497.00C1248.02,497.00 1253.09,497.00 1258.16,497.00" stroke="#f0ad2b" stroke-width="2" fill="none"/><circle cx="406.40" cy="497.00" r="3" fill="#fff" stroke="#f0ad2b" stroke-width="2"/><circle cx="421.61" cy="497.00" r="3" fill="#fff" stroke="#f0ad2b" stroke-width="2"/><circle cx="436.82" cy="497.00" r="3" fill="#fff" stroke="#f0ad2b" stroke-width="2"/><circle cx="452.03" cy="497.00" r="3" fill="#fff" stroke="#f0ad2b" stroke-width="2"/><circle cx="467.24" cy="497.00" r="3" fill="#fff" stroke="#f0ad2b" stroke-width="2"/><circle cx="482.45" cy="497.00" r="3" fill="#fff" stroke="#f0ad2b" stroke-width="2"/><circle cx="497.66" cy="497.00" r="3" fill="#fff" stroke="#f0ad2b" stroke-width="2"/><circle cx="512.87" cy="329.40" r="3" fill="#fff" stroke="#f0ad2b" stroke-width="2"/><circle cx="528.08" cy="497.00" r="3" fill="#fff" stroke="#f0ad2b" stroke-width="2"/><circle cx="543.29" cy="497.00" r="3" fill="#fff" stroke="#f0ad2b" stroke-width="2"/><circle cx="558.50" cy="497.00" r="3" fill="#fff" stroke="#f0ad2b" stroke-width="2"/><circle cx="573.71" cy="497.00" r="3" fill="#fff" stroke="#f0ad2b" stroke-width="2"/><circle cx="588.92" cy="497.00" r="3" fill="#fff" stroke="#f0ad2b" stroke-width="2"/><circle cx="604.13" cy="497.00" r="3" fill="#fff" stroke="#f0ad2b" stroke-width="2"/><circle cx="619.34" cy="488.70" r="3" fill="#fff" stroke="#f0ad2b" stroke-width="2"/><circle cx="634.55" cy="497.00" r="3" fill="#fff" stroke="#f0ad2b" stroke-width="2"/><circle cx="649.76" cy="497.00" r="3" fill="#fff" stroke="#f0ad2b" stroke-width="2"/><circle cx="664.97" cy="497.00" r="3" fill="#fff" stroke="#f0ad2b" stroke-width="2"/><circle cx="680.18" cy="497.00" r="3" fill="#fff" stroke="#f0ad2b" stroke-width="2"/><circle cx="695.39" cy="497.00" r="3" fill="#fff" stroke="#f0ad2b" stroke-width="2"/><circle cx="710.60" cy="497.00" r="3" fill="#fff" stroke="#f0ad2b" stroke-width="2"/><circle cx="725.81" cy="497.00" r="3" fill="#fff" stroke="#f0ad2b" stroke-width="2"/><circle cx="741.02" cy="497.00" r="3" fill="#fff" stroke="#f0ad2b" stroke-width="2"/><circle cx="756.23" cy="497.00" r="3" fill="#fff" stroke="#f0ad2b" stroke-width="2"/><circle cx="771.44" cy="497.00" r="3" fill="#fff" stroke="#f0ad2b" stroke-width="2"/><circle cx="786.65" cy="497.00" r="3" fill="#fff" stroke="#f0ad2b" stroke-width="2"/><circle cx="801.86" cy="497.00" r="3" fill="#fff" stroke="#f0ad2b" stroke-width="2"/><circle cx="817.07" cy="497.00" r="3" fill="#fff" stroke="#f0ad2b" stroke-width="2"/><circle cx="832.28" cy="497.00" r="3" fill="#fff" stroke="#f0ad2b" stroke-width="2"/><circle cx="847.49" cy="497.00" r="3" fill="#fff" stroke="#f0ad2b" stroke-width="2"/><circle cx="862.70" cy="472.90" r="3" fill="#fff" stroke="#f0ad2b" stroke-width="2"/><circle cx="877.91" cy="487.40" r="3" fill="#fff" stroke="#f0ad2b" stroke-width="2"/><circle cx="893.12" cy="497.00" r="3" fill="#fff" stroke="#f0ad2b" stroke-width="2"/><circle cx="908.33" cy="489.70" r="3" fill="#fff" stroke="#f0ad2b" stroke-width="2"/><circle cx="923.54" cy="497.00" r="3" fill="#fff" stroke="#f0ad2b" stroke-width="2"/><circle cx="938.75" cy="401.30" r="3" fill="#fff" stroke="#f0ad2b" stroke-width="2"/><circle cx="953.96" cy="495.00" r="3" fill="#fff" stroke="#f0ad2b" stroke-width="2"/><circle cx="969.17" cy="439.00" r="3" fill="#fff" stroke="#f0ad2b" stroke-width="2"/><circle cx="984.38" cy="497.00" r="3" fill="#fff" stroke="#f0ad2b" stroke-width="2"/><circle cx="999.59" cy="497.00" r="3" fill="#fff" stroke="#f0ad2b" stroke-width="2"/><circle cx="1014.80" cy="497.00" r="3" fill="#fff" stroke="#f0ad2b" stroke-width="2"/><circle cx="1030.01" cy="497.00" r="3" fill="#fff" stroke="#f0ad2b" stroke-width="2"/><circle cx="1045.22" cy="363.10" r="3" fill="#fff" stroke="#f0ad2b" stroke-width="2"/><circle cx="1060.43" cy="329.60" r="3" fill="#fff" stroke="#f0ad2b" stroke-width="2"/><circle cx="1075.64" cy="497.00" r="3" fill="#fff" stroke="#f0ad2b" stroke-width="2"/><circle cx="1090.85" cy="427.30" r="3" fill="#fff" stroke="#f0ad2b" stroke-width="2"/><circle cx="1106.06" cy="497.00" r="3" fill="#fff" stroke="#f0ad2b" stroke-width="2"/><circle cx="1121.27" cy="497.00" r="3" fill="#fff" stroke="#f0ad2b" stroke-width="2"/><circle cx="1136.48" cy="497.00" r="3" fill="#fff" stroke="#f0ad2b" stroke-width="2"/><circle cx="1151.69" cy="497.00" r="3" fill="#fff" stroke="#f0ad2b" stroke-width="2"/><circle cx="1166.90" cy="497.00" r="3" fill="#fff" stroke="#f0ad2b" stroke-width="2"/><circle cx="1182.11" cy="497.00" r="3" fill="#fff" stroke="#f0ad2b" stroke-width="2"/><circle cx="1197.32" cy="497.00" r="3" fill="#fff" stroke="#f0ad2b" stroke-width="2"/><circle cx="1212.53" cy="491.80" r="3" fill="#fff" stroke="#f0ad2b" stroke-width="2"/><circle cx="1227.74" cy="476.60" r="3" fill="#fff" stroke="#f0ad2b" stroke-width="2"/><circle cx="1242.95" cy="497.00" r="3" fill="#fff" stroke="#f0ad2b" stroke-width="2"/><circle cx="1258.16" cy="497.00" r="3" fill="#fff" stroke="#f0ad2b" stroke-width="2"/><rect x="399" y="527" width="867" height="23" fill="#d5e8fc" stroke="#7fb2f0" stroke-width="1.2"/><rect x="730.5" y="527.6" width="533" height="21.8" fill="#b6d6f7"/><rect x="728.5" y="527" width="4.5" height="23" fill="#4a8ee3"/><rect x="729.8" y="536.5" width="2" height="4" fill="#cfe3fb"/><rect x="1261.5" y="527" width="4.5" height="23" fill="#4a8ee3"/><rect x="1262.8" y="536.5" width="2" height="4" fill="#cfe3fb"/></svg><div class="t" style="right:1014.50px;top:299.00px;font-size:16px;color:#666;">631</div><div class="t" style="right:1014.50px;top:369.00px;font-size:16px;color:#666;">400</div><div class="t" style="right:1014.50px;top:429.00px;font-size:16px;color:#666;">200</div><div class="t" style="right:1014.50px;top:490.00px;font-size:16px;color:#666;">0</div><div class="t" style="left:1274.40px;top:299.00px;font-size:16px;color:#666;">100%</div><div class="t" style="left:1274.40px;top:346.00px;font-size:16px;color:#666;">75%</div><div class="t" style="left:1274.40px;top:394.00px;font-size:16px;color:#666;">50%</div><div class="t" style="left:1274.40px;top:442.00px;font-size:16px;color:#666;">25%</div><div class="t" style="left:1274.40px;top:490.00px;font-size:16px;color:#666;">0%</div><div class="t" style="left:366.40px;width:80px;text-align:center;top:504.17px;font-size:11.5px;color:#666;">Dec-9</div><div class="t" style="left:488.08px;width:80px;text-align:center;top:504.17px;font-size:11.5px;color:#666;">Dec-17</div><div class="t" style="left:609.76px;width:80px;text-align:center;top:504.17px;font-size:11.5px;color:#666;">Dec-25</div><div class="t" style="left:731.44px;width:80px;text-align:center;top:504.17px;font-size:11.5px;color:#666;">Jan-2</div><div class="t" style="left:853.12px;width:80px;text-align:center;top:504.17px;font-size:11.5px;color:#666;">Jan-10</div><div class="t" style="left:974.80px;width:80px;text-align:center;top:504.17px;font-size:11.5px;color:#666;">Jan-18</div><div class="t" style="left:1096.48px;width:80px;text-align:center;top:504.17px;font-size:11.5px;color:#666;">Jan-26</div><div class="t" style="left:1218.16px;width:80px;text-align:center;top:504.17px;font-size:11.5px;color:#666;">Feb-3</div><div class="t" style="left:285px;top:393px;width:120px;height:16px;text-align:center;font-size:16px;color:#666;transform:rotate(-90deg);transform-origin:60px 8px;">Datapoint Count</div><div class="t" style="left:1262.5px;top:393.7px;width:120px;height:16px;text-align:center;font-size:16px;color:#666;transform:rotate(-90deg);transform-origin:60px 8px;">Issue Rate (%)</div><div class="t" style="right:682.40px;top:532.00px;font-size:16.5px;color:#4a8ee3;">Dec-9</div><div class="t" style="left:1271.00px;top:532.00px;font-size:16.5px;color:#4a8ee3;">Feb-3</div><div style="position:absolute;left:409px;top:264.7px;width:14px;height:10.5px;box-sizing:border-box;background:#f0ad2b;"></div><div class="t" style="left:428.90px;top:261.00px;font-size:16px;color:#111;font-weight:700;">Warnings: 368</div><svg style="position:absolute;left:549px;top:262px;" width="14" height="14" viewBox="0 0 14 14" fill="none" ><path d="M0 7.5 H14" stroke="#f0ad2b" stroke-width="1.6"/><circle cx="7" cy="7.5" r="2.6" fill="#fff" stroke="#f0ad2b" stroke-width="1.6"/></svg><div class="t" style="left:567.30px;top:261.00px;font-size:16px;color:#111;font-weight:700;">Avg Warning Rate: 14.4%</div><div style="position:absolute;left:768px;top:264.7px;width:14px;height:10.5px;box-sizing:border-box;background:#ec5d52;"></div><div class="t" style="left:787.00px;top:261.00px;font-size:16px;color:#111;font-weight:700;">Errors: 42</div><svg style="position:absolute;left:871px;top:262px;" width="14" height="14" viewBox="0 0 14 14" fill="none" ><path d="M0 7.5 H14" stroke="#ec5d52" stroke-width="1.6"/><circle cx="7" cy="7.5" r="2.6" fill="#fff" stroke="#ec5d52" stroke-width="1.6"/></svg><div class="t" style="left:889.50px;top:261.00px;font-size:16px;color:#111;font-weight:700;">Avg Error Rate: 1.6%</div><div style="position:absolute;left:1055px;top:264.7px;width:14px;height:10.5px;box-sizing:border-box;background:#4e97e9;"></div><div class="t" style="left:1073.00px;top:261.00px;font-size:16px;color:#111;font-weight:700;">Total Datapoints: 2558</div><div style="position:absolute;left:316px;top:594px;width:1073px;height:520px;box-sizing:border-box;background:#fff;border:1px solid #e3e5ec;border-radius:8px;"></div><div class="t" style="left:336.60px;top:624.00px;font-size:14.5px;color:#111;">Detail</div><div class="t" style="left:404.50px;top:624.00px;font-size:14.5px;color:#111;">Model Result</div><div class="t" style="left:655.60px;top:624.00px;font-size:14.5px;color:#111;">Checks</div><div class="t" style="left:907.00px;top:624.00px;font-size:14.5px;color:#111;">Status</div><div class="t" style="left:1044.20px;top:624.00px;font-size:14.5px;color:#111;">Provider</div><div class="t" style="left:1127.80px;top:624.00px;font-size:14.5px;color:#111;">Source</div><div class="t" style="left:1212.40px;top:624.00px;font-size:14.5px;color:#111;">End Time</div><div style="position:absolute;left:327px;top:657px;width:1051px;height:1px;box-sizing:border-box;background:#e2e4ea;"></div><div style="position:absolute;left:327px;top:724px;width:1051px;height:1px;box-sizing:border-box;background:#e2e4ea;"></div><div style="position:absolute;left:327px;top:893px;width:1051px;height:1px;box-sizing:border-box;background:#e2e4ea;"></div><div style="position:absolute;left:393px;top:657px;width:1px;height:440px;box-sizing:border-box;background:#e2e4ea;"></div><div style="position:absolute;left:645px;top:657px;width:1px;height:440px;box-sizing:border-box;background:#e2e4ea;"></div><div style="position:absolute;left:896px;top:657px;width:1px;height:440px;box-sizing:border-box;background:#e2e4ea;"></div><div style="position:absolute;left:1034px;top:657px;width:1px;height:440px;box-sizing:border-box;background:#e2e4ea;"></div><div style="position:absolute;left:1118px;top:657px;width:1px;height:440px;box-sizing:border-box;background:#e2e4ea;"></div><div style="position:absolute;left:1202px;top:657px;width:1px;height:440px;box-sizing:border-box;background:#e2e4ea;"></div><svg style="position:absolute;left:345px;top:677px;" width="28" height="28" viewBox="0 0 28 28" fill="none" ><rect width="28" height="28" rx="4.5" fill="#438be1"/><g stroke="#fff" stroke-width="1.3" stroke-linecap="round" stroke-linejoin="round" fill="none"><path d="M7.3 13.6 V8.6 a1.4 1.4 0 0 1 1.4 -1.4 H19.5 a1.4 1.4 0 0 1 1.4 1.4 V19.4 a1.4 1.4 0 0 1 -1.4 1.4 H14.2"/><rect x="7" y="17.4" width="3.9" height="3.9" rx="0.8"/><path d="M13.2 14.8 L17.6 10.4 M14.2 10.4 H17.6 V13.8"/></g></svg><div class="t" style="left:404.60px;top:684.00px;font-size:16.7px;color:#111;">{"classification":"School","ex...</div><div class="t" style="left:656.70px;top:684.00px;font-size:15px;color:#111;">-</div><svg style="position:absolute;left:909px;top:676px;" width="24" height="24" viewBox="0 0 24 24" fill="none" ><circle cx="12" cy="12" r="10.5" stroke="#3f8de6" stroke-width="2"/><path d="M7.9 11.4 L10.7 14.4 L16 9" stroke="#3f8de6" stroke-width="2" stroke-linecap="round" stroke-linejoin="round"/></svg><div class="t" style="left:1045.40px;top:684.00px;font-size:14.5px;color:#111;">openai</div><div class="t" style="left:1127.60px;top:684.00px;font-size:14.5px;color:#111;">Proxy</div><div class="t" style="left:1212.40px;top:683.00px;font-size:15px;color:#111;">2026-02-03 12:01:26</div><svg style="position:absolute;left:345px;top:795px;" width="28" height="28" viewBox="0 0 28 28" fill="none" ><rect width="28" height="28" rx="4.5" fill="#438be1"/><g stroke="#fff" stroke-width="1.3" stroke-linecap="round" stroke-linejoin="round" fill="none"><path d="M7.3 13.6 V8.6 a1.4 1.4 0 0 1 1.4 -1.4 H19.5 a1.4 1.4 0 0 1 1.4 1.4 V19.4 a1.4 1.4 0 0 1 -1.4 1.4 H14.2"/><rect x="7" y="17.4" width="3.9" height="3.9" rx="0.8"/><path d="M13.2 14.8 L17.6 10.4 M14.2 10.4 H17.6 V13.8"/></g></svg><svg style="position:absolute;left:405.5px;top:744.8px;" width="9" height="5" viewBox="0 0 9 5" fill="none" ><path d="M0.5 0.3 H8.3 L4.4 4.3 Z" fill="#5f6b73"/></svg><div class="t" style="left:422.80px;top:743.00px;font-size:12px;color:#0b2330;font-weight:700;">[</div><div style="position:absolute;left:410px;top:760px;width:1px;height:99px;box-sizing:border-box;background:#e6e6e6;"></div><div class="t" style="left:432.30px;top:765.00px;font-size:12.7px;color:#c35a2c;">"You're very welcome. I'm glad I</div><div class="t" style="left:432.30px;top:784.00px;font-size:12.7px;color:#c35a2c;">could help. If you have any more</div><div class="t" style="left:432.30px;top:802.00px;font-size:12.7px;color:#c35a2c;">questions in the future, feel free</div><div class="t" style="left:432.30px;top:821.00px;font-size:12.7px;color:#c35a2c;">to reach out Have a wonderful</div><div class="t" style="left:432.30px;top:840.00px;font-size:12.7px;color:#c35a2c;">day. Mike?"</div><div class="t" style="left:407.40px;top:862.00px;font-size:12px;color:#0b2330;font-weight:700;">]</div><div style="position:absolute;left:656px;top:786px;width:217px;height:20px;box-sizing:border-box;background:#e9f1fc;border-radius:10px;"></div><div class="t" style="left:667.10px;top:791.00px;font-size:11.5px;color:#3f86dc;font-weight:700;letter-spacing:0.45px;">AVG TURN LATENCY (MS): 24389</div><div style="position:absolute;left:656px;top:814px;width:230px;height:20px;box-sizing:border-box;background:#e9f1fc;border-radius:10px;"></div><div class="t" style="left:667.10px;top:819.00px;font-size:11.5px;color:#3f86dc;font-weight:700;letter-spacing:0.12px;">AVG TURN TAKING LATENCY (MS)...</div><svg style="position:absolute;left:909px;top:794px;" width="24" height="24" viewBox="0 0 24 24" fill="none" ><circle cx="12" cy="12" r="10.5" stroke="#3f8de6" stroke-width="2"/><path d="M7.9 11.4 L10.7 14.4 L16 9" stroke="#3f8de6" stroke-width="2" stroke-linecap="round" stroke-linejoin="round"/></svg><div class="t" style="left:1045.40px;top:801.00px;font-size:15px;color:#111;">-</div><div class="t" style="left:1128.00px;top:802.00px;font-size:14.5px;color:#111;">Okareo</div><div class="t" style="left:1212.40px;top:801.00px;font-size:15px;color:#111;">2026-02-02 20:38:42</div><svg style="position:absolute;left:345px;top:1005px;" width="28" height="28" viewBox="0 0 28 28" fill="none" ><rect width="28" height="28" rx="4.5" fill="#438be1"/><g stroke="#fff" stroke-width="1.3" stroke-linecap="round" stroke-linejoin="round" fill="none"><path d="M7.3 13.6 V8.6 a1.4 1.4 0 0 1 1.4 -1.4 H19.5 a1.4 1.4 0 0 1 1.4 1.4 V19.4 a1.4 1.4 0 0 1 -1.4 1.4 H14.2"/><rect x="7" y="17.4" width="3.9" height="3.9" rx="0.8"/><path d="M13.2 14.8 L17.6 10.4 M14.2 10.4 H17.6 V13.8"/></g></svg><svg style="position:absolute;left:405.5px;top:913.8px;" width="9" height="5" viewBox="0 0 9 5" fill="none" ><path d="M0.5 0.3 H8.3 L4.4 4.3 Z" fill="#5f6b73"/></svg><div class="t" style="left:422.80px;top:912.00px;font-size:12px;color:#0b2330;font-weight:700;">[</div><div style="position:absolute;left:410px;top:929px;width:1px;height:170px;box-sizing:border-box;background:#e6e6e6;"></div><div class="t" style="left:432.30px;top:934.00px;font-size:12.7px;color:#c35a2c;">"Great."</div><div class="t" style="left:432.30px;top:959.00px;font-size:12.7px;color:#c35a2c;">"Yes. Based on the information</div><div class="t" style="left:432.30px;top:978.00px;font-size:12.7px;color:#c35a2c;">provided, your powertrain</div><div class="t" style="left:432.30px;top:996.00px;font-size:12.7px;color:#c35a2c;">warranty is still active for your</div><div class="t" style="left:432.30px;top:1015.00px;font-size:12.7px;color:#c35a2c;">2018 Honda Pilot. You have</div><div class="t" style="left:432.30px;top:1034.00px;font-size:12.7px;color:#c35a2c;">coverage until you reach 60,000</div><div class="t" style="left:432.30px;top:1052.00px;font-size:12.7px;color:#c35a2c;">miles or the 2023. If you have any</div><div class="t" style="left:432.30px;top:1071.00px;font-size:12.7px;color:#c35a2c;">more questions or need further</div><div class="t" style="left:432.30px;top:1090.00px;font-size:12.7px;color:#c35a2c;">assistance, feel free to reach out.</div><div class="t" style="left:656.70px;top:1011.00px;font-size:15px;color:#111;">-</div><svg style="position:absolute;left:909px;top:1004px;" width="24" height="24" viewBox="0 0 24 24" fill="none" ><circle cx="12" cy="12" r="10.5" stroke="#3f8de6" stroke-width="2"/><path d="M7.9 11.4 L10.7 14.4 L16 9" stroke="#3f8de6" stroke-width="2" stroke-linecap="round" stroke-linejoin="round"/></svg><div class="t" style="left:1045.40px;top:1011.00px;font-size:15px;color:#111;">-</div><div class="t" style="left:1128.00px;top:1011.00px;font-size:14.5px;color:#111;">Okareo</div><div class="t" style="left:1212.40px;top:1010.00px;font-size:15px;color:#111;">2026-02-02 20:38:23</div></div><div style="position:absolute;left:0;top:0;width:1405px;height:1092px;box-sizing:border-box;border:1px solid #8e8e8e;border-radius:17px;pointer-events:none;"></div></body></html>
